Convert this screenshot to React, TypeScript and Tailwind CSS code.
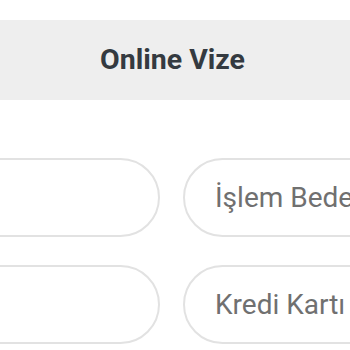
import React from "react";

export default function App() {
  const font = { fontFamily: "Roboto, 'Noto Sans', sans-serif" };
  return (
    <div className="w-[350px] h-[350px] overflow-hidden bg-white" style={font}>
      <div className="pt-[20px]">
        <div className="h-[80px] bg-[#eeeeee] flex items-center justify-center">
          <span className="text-[28.5px] font-bold text-[#343a40] ml-[-5px]">Online Vize</span>
        </div>
      </div>
      <div className="ml-[-160px] w-[663px] mt-[58px] grid grid-cols-2 gap-x-[23px] gap-y-[28px]">
        <div className="h-[79px] rounded-full border-2 border-[#e2e2e2]"></div>
        <div className="h-[79px] rounded-full border-2 border-[#e2e2e2] flex items-center pl-[30px] overflow-hidden">
          <span className="text-[28px] text-[#707070] whitespace-nowrap">İşlem Bedeli</span>
        </div>
        <div className="h-[79px] rounded-full border-2 border-[#e2e2e2]"></div>
        <div className="h-[79px] rounded-full border-2 border-[#e2e2e2] flex items-center pl-[30px] overflow-hidden">
          <span className="text-[28px] text-[#707070] whitespace-nowrap">Kredi Kartı</span>
        </div>
      </div>
    </div>
  );
}
